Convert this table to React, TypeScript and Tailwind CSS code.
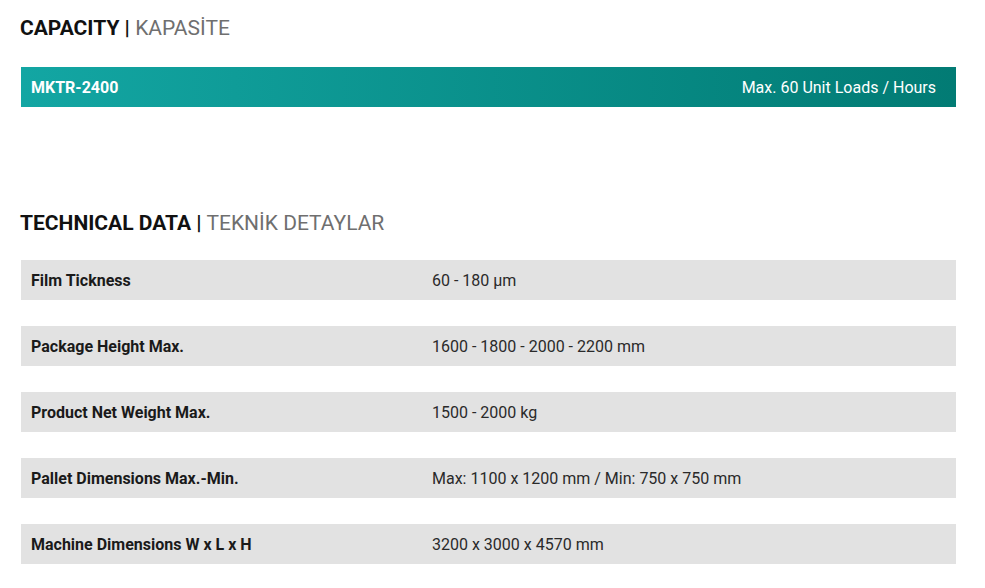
import React from "react";

const specs = [
  { label: "Film Tickness", value: "60 - 180 µm" },
  { label: "Package Height Max.", value: "1600 - 1800 - 2000 - 2200 mm" },
  { label: "Product Net Weight Max.", value: "1500 - 2000 kg" },
  { label: "Pallet Dimensions Max.-Min.", value: "Max: 1100 x 1200 mm / Min: 750 x 750 mm" },
  { label: "Machine Dimensions W x L x H", value: "3200 x 3000 x 4570 mm" },
];

const SectionTitle: React.FC<{ en: string; tr: string }> = ({ en, tr }) => (
  <h2 className="text-[21px] leading-[24px]">
    <span className="font-bold text-[#111]">{en} |</span>{" "}
    <span className="font-normal text-[#6f6f6f]">{tr}</span>
  </h2>
);

export default function App() {
  return (
    <div className="w-[985px] h-[588px] bg-white pl-[20px] pr-[29px] pt-[16px] font-['Roboto',_'Liberation_Sans',_sans-serif]">
      <SectionTitle en="CAPACITY" tr="KAPASİTE" />

      <div className="mt-[27px] ml-px h-[40px] flex items-center justify-between pl-[10px] pr-[20px] pt-[2px] bg-gradient-to-r from-[#13a6a3] to-[#027b74] text-white text-[16px]">
        <span className="font-bold">MKTR-2400</span>
        <span>Max. 60 Unit Loads / Hours</span>
      </div>

      <div className="mt-[104px]">
        <SectionTitle en="TECHNICAL DATA" tr="TEKNİK DETAYLAR" />
      </div>

      <div className="mt-[25px] ml-px flex flex-col gap-[26px]">
        {specs.map((row) => (
          <div key={row.label} className="h-[40px] flex items-center pt-[2px] bg-[#e2e2e2] text-[16px]">
            <span className="w-[411px] pl-[10px] font-bold text-[#1a1a1a]">{row.label}</span>
            <span className="text-[#2a2a2a]">{row.value}</span>
          </div>
        ))}
      </div>
    </div>
  );
}
